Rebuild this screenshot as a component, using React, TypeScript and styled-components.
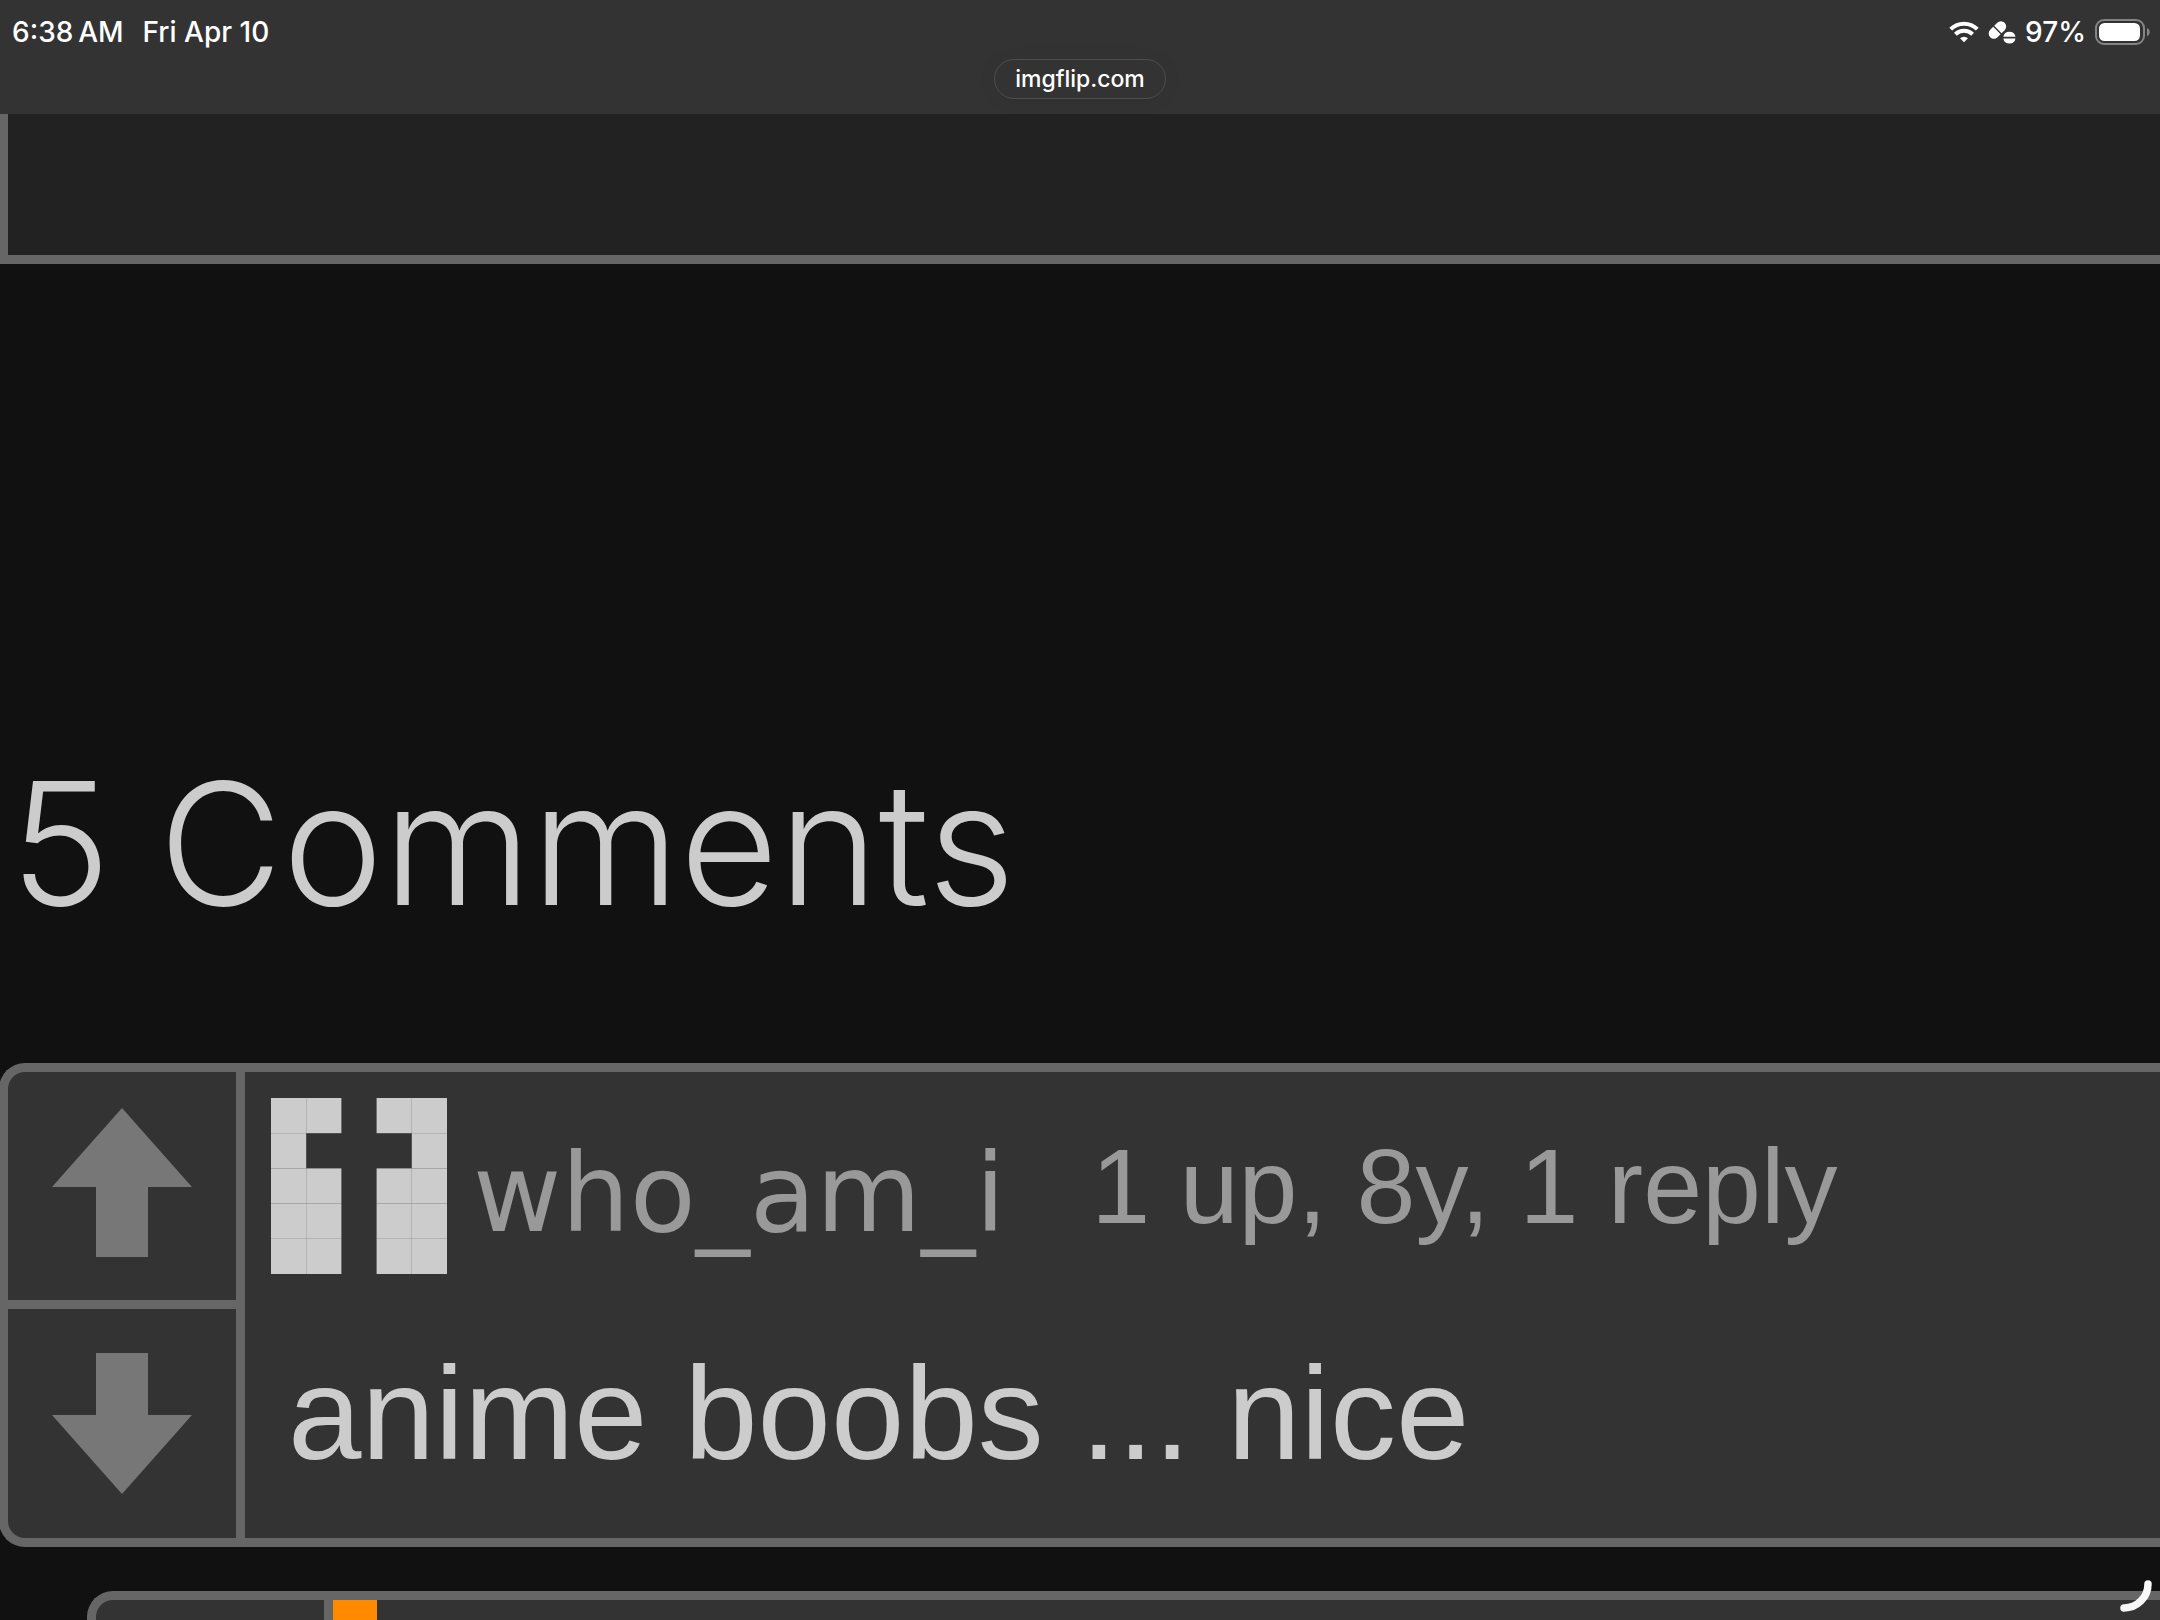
import React from "react";
import styled, { createGlobalStyle } from "styled-components";

const GlobalStyle = createGlobalStyle`
  *, *::before, *::after { box-sizing: border-box; }
  body {
    margin: 0;
    background: #111;
    color: #ccc;
    font-family: "Liberation Sans", Arial, sans-serif;
  }
`;

const Page = styled.div`
  display: flex;
  flex-direction: column;
  height: 100vh;
  overflow: hidden;
`;

const BrowserBar = styled.header`
  flex: none;
  display: flex;
  flex-direction: column;
  height: 114px;
  background: #333;
  color: #fff;
  font-family: Inter, sans-serif;
  font-weight: 500;
`;

const StatusRow = styled.div`
  display: flex;
  align-items: center;
  justify-content: space-between;
  height: 32px;
  margin-top: 16px;
  padding: 0 10px 0 12px;
  font-size: 28px;
  line-height: 32px;
`;

const StatusGroup = styled.div<{ $gap: number }>`
  display: flex;
  align-items: center;
  gap: ${(p) => p.$gap}px;
`;

const AddressPill = styled.button`
  align-self: center;
  height: 40px;
  margin-top: 11px;
  padding: 0 20px;
  border: 1px solid #4e4e4e;
  border-radius: 20px;
  background: #333;
  box-shadow: 0 2px 20px rgba(0, 0, 0, 0.06);
  color: #fff;
  font: 500 23px/38px Inter, sans-serif;
`;

const Content = styled.main`
  flex: none;
  display: flex;
  flex-direction: column;
`;

const ImageFrame = styled.section`
  height: 150px;
  margin-left: -1px;
  border: solid #666;
  border-width: 0 0 9px 9px;
  background: #222;
`;

const AdSpace = styled.aside`
  height: 474px;
`;

const Heading = styled.h2`
  margin: 0 0 115px;
  padding-left: 10px;
  color: #ccc;
  font: 300 170px/210px Inter, sans-serif;
`;

const CommentBox = styled.article<{ $indent: number }>`
  display: flex;
  margin: 0 0 44px ${(p) => p.$indent}px;
  border: 9px solid #666;
  border-right: 0;
  border-radius: 26px 0 0 26px;
  background: #333;
`;

const Votes = styled.div`
  flex: none;
  display: flex;
  flex-direction: column;
  width: 237px;
  border-right: 9px solid #666;
`;

const VoteButton = styled.button`
  display: flex;
  align-items: center;
  justify-content: center;
  height: 228px;
  padding: 0;
  border: 0;
  background: none;

  & + & {
    height: 238px;
    border-top: 9px solid #666;
  }
`;

const Body = styled.div`
  flex: 1;
  padding: 26px;
`;

const CommentHeader = styled.div`
  display: flex;
  align-items: center;
  height: 176px;
`;

const Username = styled.a`
  margin-left: 26px;
  padding-top: 16px;
  color: #999;
  font: 108px/124px Verdana, "DejaVu Sans", sans-serif;
  text-decoration: none;
`;

const Meta = styled.span`
  margin-left: 86px;
  color: #999;
  font-size: 106px;
  line-height: 124px;
`;

const CommentText = styled.p`
  margin: 60px 0 0;
  padding-left: 17px;
  font-size: 132px;
  line-height: 160px;
  height: 160px;
`;

const UserStripe = styled.div`
  width: 44px;
  background: #ff8a00;
`;

const Loader = styled.svg`
  position: fixed;
  right: 8px;
  bottom: 8px;
`;

function WifiIcon() {
  return (
    <svg width="30" height="22" viewBox="0 0 30 22" fill="none" stroke="#fff" strokeWidth="4" aria-label="Wi-Fi">
      <path d="M1.7 8.1a19 19 0 0 1 26.6 0" />
      <path d="M6.4 13.3a12.3 12.3 0 0 1 17.2 0" />
      <path d="M15 21.2l-4-4a5.9 5.9 0 0 1 8 0z" fill="#fff" stroke="none" />
    </svg>
  );
}

function PillsIcon() {
  return (
    <svg width="28" height="24" viewBox="0 0 28 24" fill="#fff" aria-label="Medication focus">
      <g transform="rotate(-45 9.4 10)">
        <path d="M8.7 4.8H4.4a5.2 5.2 0 0 0 0 10.4h4.3z" />
        <path d="M10.1 4.8h4.3a5.2 5.2 0 0 1 0 10.4h-4.3z" />
      </g>
      <path d="M15.3 16.8a6.2 6.2 0 0 1 12.2 0z" />
      <path d="M15.3 18.4a6.2 6.2 0 0 0 12.2 0z" />
    </svg>
  );
}

function BatteryIcon() {
  return (
    <svg width="55" height="26" viewBox="0 0 55 26" aria-label="Battery">
      <rect x="1" y="1" width="48" height="24" rx="8" fill="none" stroke="#858585" strokeWidth="2" />
      <rect x="4" y="4" width="41" height="18" rx="5.5" fill="#fff" />
      <path d="M52 9c3.6 1.2 3.6 7 0 8.2z" fill="#858585" />
    </svg>
  );
}

function VoteArrow({ down }: { down?: boolean }) {
  return (
    <svg width="140" height="156" viewBox="0 0 140 156" fill="#777" aria-hidden="true">
      {down ? (
        <path d="M44 7h52v62h44l-70 79L0 69h44z" />
      ) : (
        <path d="M70 0l70 79H96v70H44V79H0z" />
      )}
    </svg>
  );
}

const AVATAR_ROWS = ["11011", "10001", "11011", "11011", "11011"];

function Avatar() {
  return (
    <svg width="176" height="176" viewBox="0 0 50 50" aria-label="who_am_i avatar">
      {AVATAR_ROWS.map((row, y) =>
        [...row].map((cell, x) =>
          cell === "1" ? <rect key={`${x}-${y}`} x={x * 10} y={y * 10} width="10" height="10" fill="#ccc" /> : null,
        ),
      )}
    </svg>
  );
}

function VoteColumn() {
  return (
    <Votes>
      <VoteButton aria-label="Upvote">
        <VoteArrow />
      </VoteButton>
      <VoteButton aria-label="Downvote">
        <VoteArrow down />
      </VoteButton>
    </Votes>
  );
}

export default function App() {
  return (
    <Page>
      <GlobalStyle />
      <BrowserBar>
        <StatusRow>
          <StatusGroup $gap={19}>
            <span>6:38{"\u202f"}AM</span>
            <span>Fri Apr 10</span>
          </StatusGroup>
          <StatusGroup $gap={9}>
            <WifiIcon />
            <PillsIcon />
            <span>97%</span>
            <BatteryIcon />
          </StatusGroup>
        </StatusRow>
        <AddressPill>imgflip.com</AddressPill>
      </BrowserBar>
      <Content>
        <ImageFrame />
        <AdSpace />
        <Heading>5 Comments</Heading>
        <CommentBox $indent={-1}>
          <VoteColumn />
          <Body>
            <CommentHeader>
              <Avatar />
              <Username href="#who_am_i">who_am_i</Username>
              <Meta>1 up, 8y, 1 reply</Meta>
            </CommentHeader>
            <CommentText>anime boobs ... nice</CommentText>
          </Body>
        </CommentBox>
        <CommentBox $indent={87}>
          <VoteColumn />
          <UserStripe />
        </CommentBox>
      </Content>
      <Loader width="32" height="32" viewBox="0 0 32 32" fill="none" stroke="#f8f8f8" strokeWidth="7.5" strokeLinecap="round" aria-label="Loading">
        <path d="M28 4A24 24 0 0 1 4 28" />
      </Loader>
    </Page>
  );
}
